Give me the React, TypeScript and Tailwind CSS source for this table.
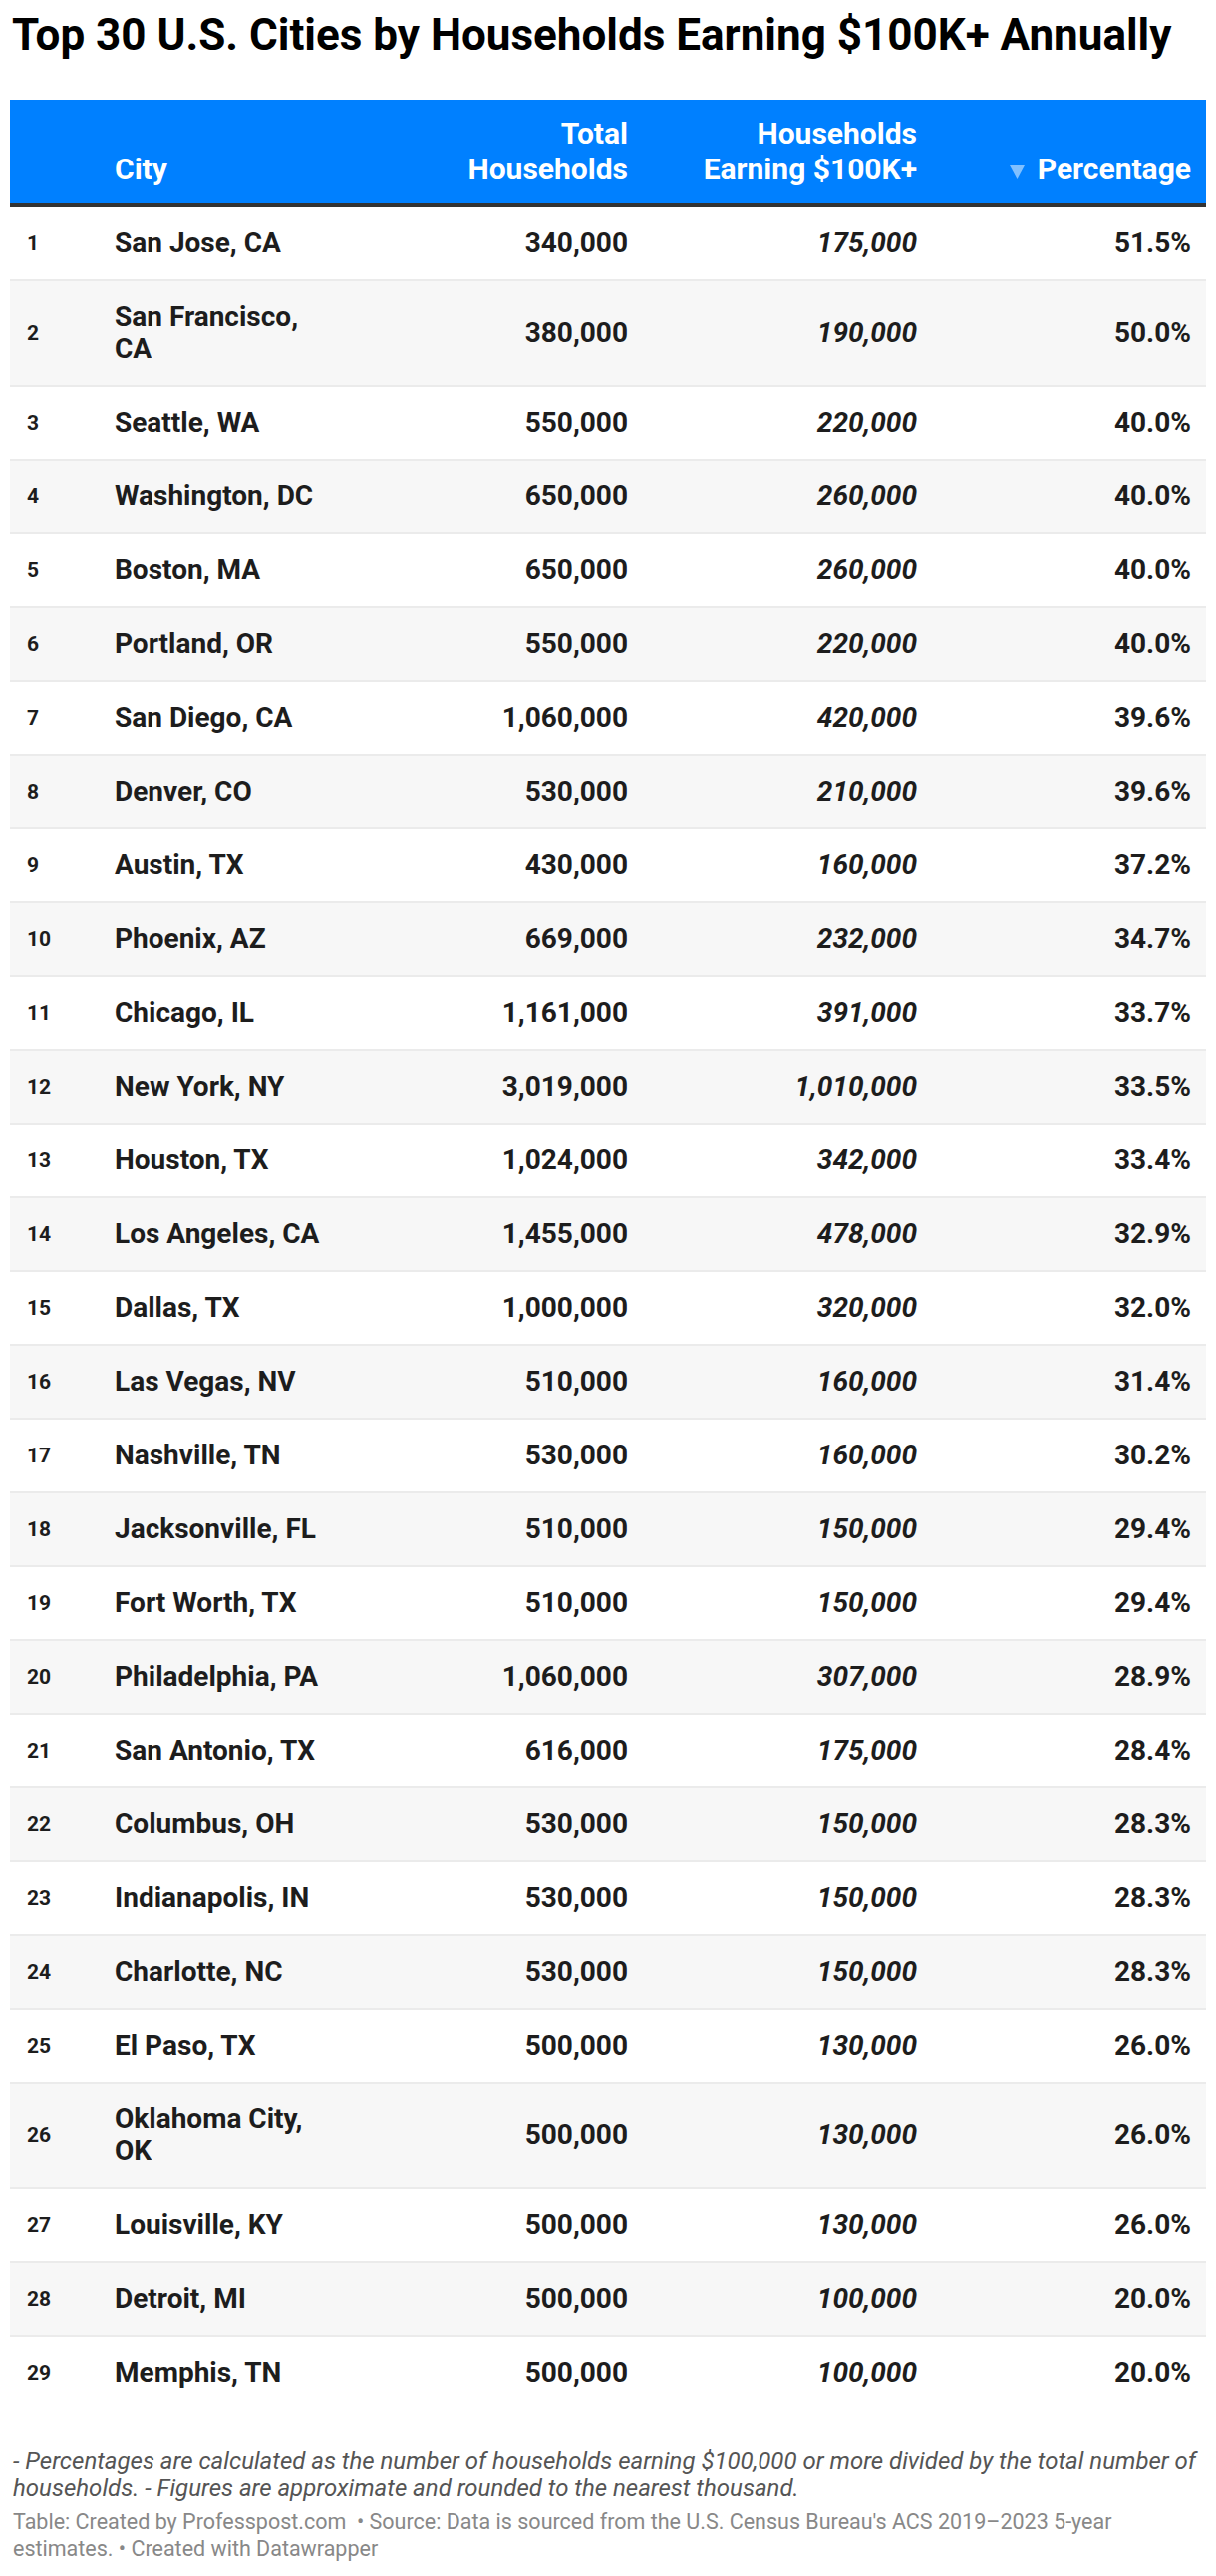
import type React from "react"

interface Row {
  rank: number
  city: string
  total: string
  earning: string
  pct: string
}

const rows: Row[] = [
  { rank: 1, city: "San Jose, CA", total: "340,000", earning: "175,000", pct: "51.5%" },
  { rank: 2, city: "San Francisco, CA", total: "380,000", earning: "190,000", pct: "50.0%" },
  { rank: 3, city: "Seattle, WA", total: "550,000", earning: "220,000", pct: "40.0%" },
  { rank: 4, city: "Washington, DC", total: "650,000", earning: "260,000", pct: "40.0%" },
  { rank: 5, city: "Boston, MA", total: "650,000", earning: "260,000", pct: "40.0%" },
  { rank: 6, city: "Portland, OR", total: "550,000", earning: "220,000", pct: "40.0%" },
  { rank: 7, city: "San Diego, CA", total: "1,060,000", earning: "420,000", pct: "39.6%" },
  { rank: 8, city: "Denver, CO", total: "530,000", earning: "210,000", pct: "39.6%" },
  { rank: 9, city: "Austin, TX", total: "430,000", earning: "160,000", pct: "37.2%" },
  { rank: 10, city: "Phoenix, AZ", total: "669,000", earning: "232,000", pct: "34.7%" },
  { rank: 11, city: "Chicago, IL", total: "1,161,000", earning: "391,000", pct: "33.7%" },
  { rank: 12, city: "New York, NY", total: "3,019,000", earning: "1,010,000", pct: "33.5%" },
  { rank: 13, city: "Houston, TX", total: "1,024,000", earning: "342,000", pct: "33.4%" },
  { rank: 14, city: "Los Angeles, CA", total: "1,455,000", earning: "478,000", pct: "32.9%" },
  { rank: 15, city: "Dallas, TX", total: "1,000,000", earning: "320,000", pct: "32.0%" },
  { rank: 16, city: "Las Vegas, NV", total: "510,000", earning: "160,000", pct: "31.4%" },
  { rank: 17, city: "Nashville, TN", total: "530,000", earning: "160,000", pct: "30.2%" },
  { rank: 18, city: "Jacksonville, FL", total: "510,000", earning: "150,000", pct: "29.4%" },
  { rank: 19, city: "Fort Worth, TX", total: "510,000", earning: "150,000", pct: "29.4%" },
  { rank: 20, city: "Philadelphia, PA", total: "1,060,000", earning: "307,000", pct: "28.9%" },
  { rank: 21, city: "San Antonio, TX", total: "616,000", earning: "175,000", pct: "28.4%" },
  { rank: 22, city: "Columbus, OH", total: "530,000", earning: "150,000", pct: "28.3%" },
  { rank: 23, city: "Indianapolis, IN", total: "530,000", earning: "150,000", pct: "28.3%" },
  { rank: 24, city: "Charlotte, NC", total: "530,000", earning: "150,000", pct: "28.3%" },
  { rank: 25, city: "El Paso, TX", total: "500,000", earning: "130,000", pct: "26.0%" },
  { rank: 26, city: "Oklahoma City, OK", total: "500,000", earning: "130,000", pct: "26.0%" },
  { rank: 27, city: "Louisville, KY", total: "500,000", earning: "130,000", pct: "26.0%" },
  { rank: 28, city: "Detroit, MI", total: "500,000", earning: "100,000", pct: "20.0%" },
  { rank: 29, city: "Memphis, TN", total: "500,000", earning: "100,000", pct: "20.0%" },
]

const cols = "grid grid-cols-[88px_252px_298px_290px_272px]"

const TableRow: React.FC<{ row: Row; last: boolean }> = ({ row, last }) => (
  <div
    className={`${cols} items-center text-[28px] leading-[32px] font-bold text-[#1d1d1d] ${
      row.rank % 2 === 0 ? "bg-[#f7f7f7]" : "bg-white"
    } ${last ? "" : "border-b-2 border-[#ebebeb]"}`}
  >
    <div className="pl-[17px] py-[20px] text-[21px]">{row.rank}</div>
    <div className="pl-[17px] pr-[20px] py-[20px]">{row.city}</div>
    <div className="pr-[18px] py-[20px] text-right">{row.total}</div>
    <div className="pr-[18px] py-[20px] text-right italic">{row.earning}</div>
    <div className="pr-[15px] py-[20px] text-right">{row.pct}</div>
  </div>
)

export default function App() {
  return (
    <div className="w-[1220px] bg-white px-[10px] pt-[9px] pb-[20px] font-['Roboto',sans-serif]">
      <h1 className="text-[44px] leading-[52px] font-bold text-black pl-[2px]">
        Top 30 U.S. Cities by Households Earning $100K+ Annually
      </h1>

      <div className="mt-[39px]">
        <div
          className={`${cols} items-end bg-[#0080ff] text-white text-[30px] leading-[36px] font-bold pt-[16px] pb-[16px] border-b-4 border-[#333333]`}
        >
          <div />
          <div className="pl-[17px]">City</div>
          <div className="pr-[18px] text-right">
            Total
            <br />
            Households
          </div>
          <div className="pr-[18px] text-right">
            Households
            <br />
            Earning $100K+
          </div>
          <div className="pr-[15px] flex items-center justify-end gap-[13px]">
            <svg width="15" height="14" viewBox="0 0 15 14" className="mt-[6px]">
              <polygon points="0,0 15,0 7.5,14" fill="#80c0ff" />
            </svg>
            <span>Percentage</span>
          </div>
        </div>

        {rows.map((r, i) => (
          <TableRow key={r.rank} row={r} last={i === rows.length - 1} />
        ))}
      </div>

      <div className="mt-[40px] pl-[3px]">
        <p className="text-[24px] leading-[27px] italic text-[#555555]">
          - Percentages are calculated as the number of households earning $100,000 or more divided by the total number of
          households. - Figures are approximate and rounded to the nearest thousand.
        </p>
        <p className="mt-[6px] text-[21.5px] leading-[27px] text-[#888888]">
          Table: Created by Professpost.com &nbsp;• Source: Data is sourced from the U.S. Census Bureau's ACS 2019–2023
          5-year estimates. • Created with Datawrapper
        </p>
      </div>
    </div>
  )
}
